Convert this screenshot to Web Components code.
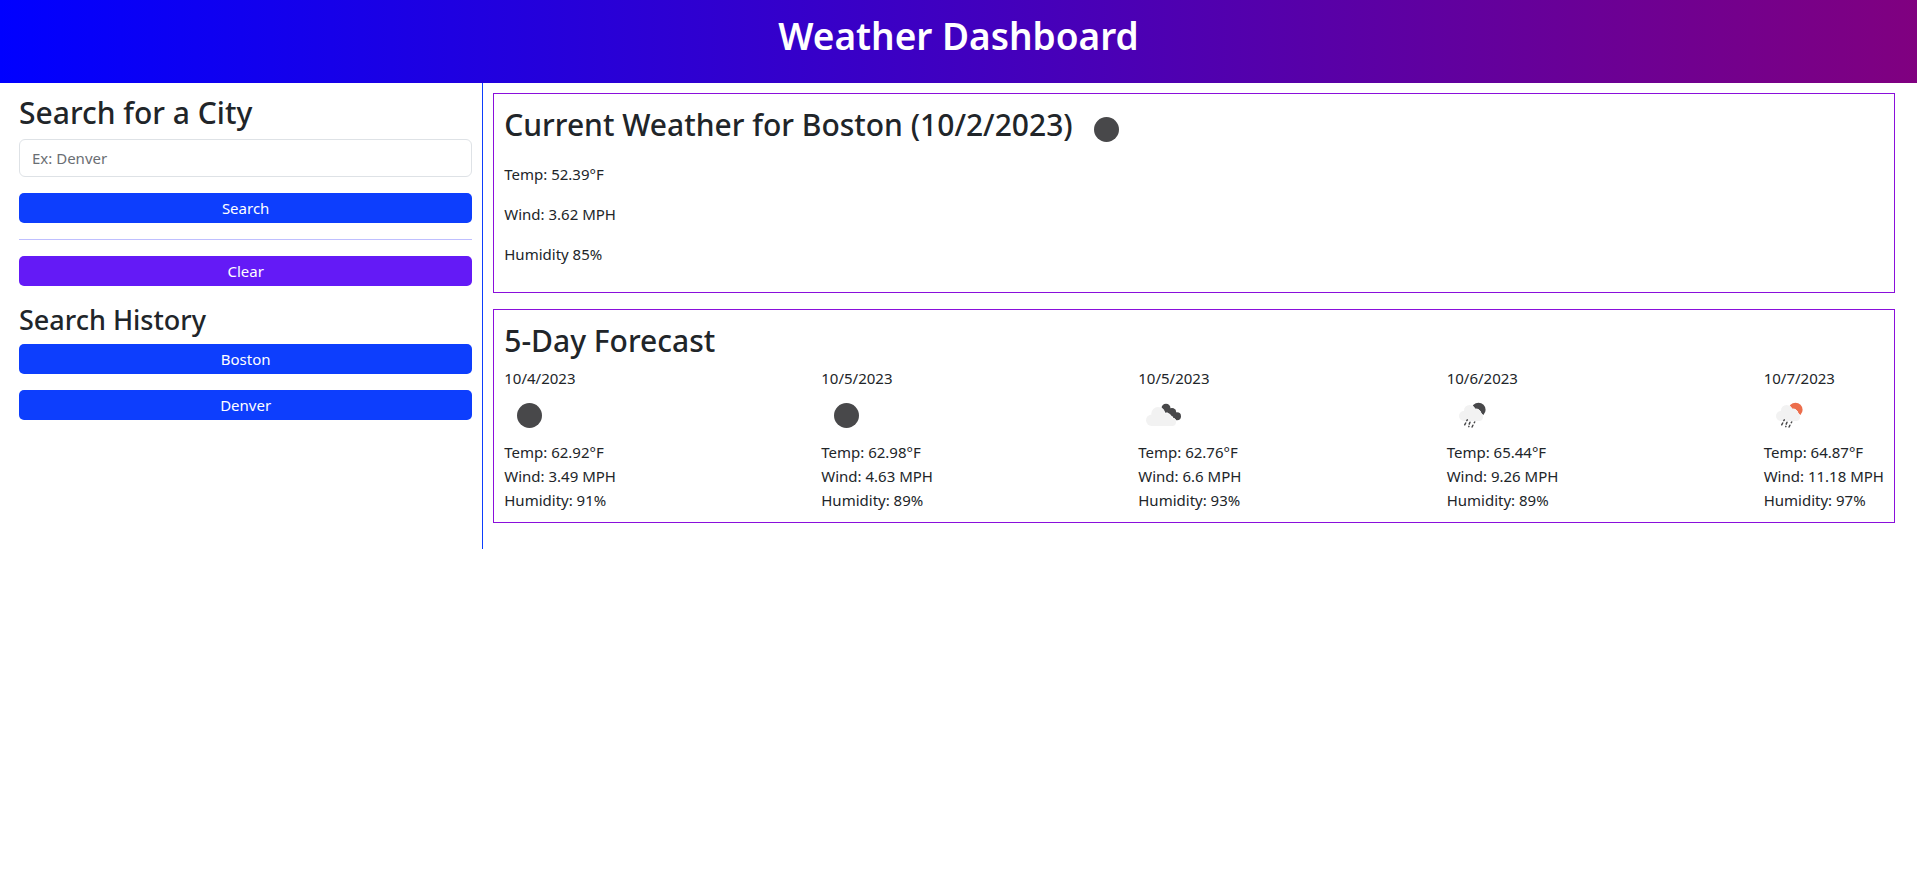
<!DOCTYPE html>
<html lang="en">
<head>
<meta charset="utf-8">
<meta name="viewport" content="width=device-width, initial-scale=1">
<title>Weather Dashboard</title>
<style>
body { margin: 0; background: #fff; color: #212529; font: 400 15px/24px "Noto Sans", "Open Sans", sans-serif; }
</style>
</head>
<body>
<weather-app></weather-app>

<script>
const define = (name, html, setup) => {
  const template = document.createElement('template');
  template.innerHTML = html;
  customElements.define(name, class extends HTMLElement {
    constructor() {
      super();
      this.attachShadow({ mode: 'open' }).append(template.content.cloneNode(true));
    }
    connectedCallback() { if (setup) setup(this, this.shadowRoot); }
  });
};

const outlined = shapes => `<g fill="#fff" stroke="#fff" stroke-width="1">${shapes}</g><g fill="#f2f2f2">${shapes}</g>`;
const smallCloud = outlined(`
  <circle cx="17" cy="26" r="5"/><circle cx="22.500" cy="20.500" r="5.500"/>
  <circle cx="29" cy="24" r="5"/><circle cx="32" cy="27" r="4"/>
  <path d="M17 22h15v9H17z"/>`);
const bigCloud = outlined(`
  <circle cx="13.700" cy="30.300" r="5.700"/><circle cx="20" cy="23.700" r="6.700"/>
  <circle cx="28.500" cy="28.500" r="5.300"/><circle cx="34" cy="32" r="4"/>
  <path d="M13.700 26h17v4h3.300v6H13.700z"/>`);
const drops = `
  <path stroke="#48484a" stroke-width="1.500" stroke-linecap="round"
    d="M20.300 29.800l-.5.9M18.700 33l-1 1.800M23 32.200l-.8 1.900M27.700 32l-.4.7M21.800 36.600l.1-.2M25.900 35.300l-.8 1.700"/>`;
const rain = color => `<circle cx="31.500" cy="19.800" r="7.100" fill="${color}"/>${smallCloud}${drops}`;
const icons = {
  moon: '<circle cx="25.500" cy="25.500" r="12.500" fill="#48484a"/>',
  clouds: `<g fill="#48484a"><circle cx="28" cy="18.200" r="4.500"/><circle cx="34" cy="22.300" r="4.200"/>
    <circle cx="39" cy="26.200" r="4"/></g>${bigCloud}`,
  'rain-night': rain('#48484a'),
  'rain-day': rain('#ec6e4c'),
};

define('weather-icon', `
<style>
  :host { display: block; width: 50px; height: 50px; flex: none; }
  svg { display: block; width: 100%; height: 100%; }
</style>
<svg viewBox="0 0 50 50" aria-hidden="true"></svg>`,
(el, root) => { root.querySelector('svg').innerHTML = icons[el.getAttribute('name')]; });

define('app-header', `
<style>
  :host { display: block; padding: 12px 0 23px; background: linear-gradient(to right, blue, purple); color: #fff; }
  h1 { margin: 0; font-size: 37px; line-height: 48px; font-weight: 600; text-align: center; }
</style>
<h1><slot></slot></h1>`);

define('action-button', `
<style>
  :host { display: block; }
  button { display: block; width: 100%; margin: 0; padding: 3px 8px; border: 0; border-radius: 5px;
    background: var(--button-color, #0d3efd); color: #fff; font: inherit; text-align: center; cursor: pointer; }
</style>
<button type="button"><slot></slot></button>`);

define('search-panel', `
<style>
  :host { display: block; padding: 10px 10px 16px 11px; border-right: 1px solid #0d3efd; }
  h2, h3 { margin: 0 0 6px; font-weight: 500; }
  h2 { font-size: 30px; line-height: 40px; }
  h3 { font-size: 27px; line-height: 36px; margin-top: 16px; }
  label { display: block; }
  input { display: block; box-sizing: border-box; width: 100%; height: 38px; margin: 0 0 16px; padding: 6px 12px;
    border: 1px solid #dee2e6; border-radius: 6px; background: #fff; color: inherit; font: inherit; }
  input::placeholder { color: #6a6e73; opacity: 1; }
  hr { margin: 16px 0; border: 0; border-top: 1px solid #bfbfff; }
  .clear { --button-color: #641af6; }
  .history { display: grid; gap: 16px; }
</style>
<h2><label for="city">Search for a City</label></h2>
<input id="city" type="text" placeholder="Ex: Denver">
<action-button>Search</action-button>
<hr>
<action-button class="clear">Clear</action-button>
<h3>Search History</h3>
<div class="history"><slot></slot></div>`);

define('weather-card', `
<style>
  :host { display: block; padding: 10px; border: 1px solid #8a0fdb; }
</style>
<slot></slot>`);

define('current-weather', `
<style>
  :host { display: block; }
  header { display: flex; align-items: flex-start; gap: 8px; margin-bottom: 8px; }
  h2 { margin: 0; font-size: 30px; line-height: 42px; font-weight: 500; }
  p { margin: 0 0 16px; }
</style>
<header><h2>Current Weather for Boston (10/2/2023)</h2><weather-icon name="moon"></weather-icon></header>
<p>Temp: 52.39°F</p>
<p>Wind: 3.62 MPH</p>
<p>Humidity 85%</p>`);

define('forecast-day', `
<style>
  :host { display: block; }
</style>
<div class="date"></div>
<weather-icon></weather-icon>
<div class="temp"></div>
<div class="wind"></div>
<div class="humidity"></div>`,
(el, root) => {
  const get = name => el.getAttribute(name);
  root.querySelector('.date').textContent = get('date');
  root.querySelector('weather-icon').replaceWith(Object.assign(document.createElement('template'),
    { innerHTML: `<weather-icon name="${get('icon')}"></weather-icon>` }).content);
  root.querySelector('.temp').textContent = `Temp: ${get('temp')}°F`;
  root.querySelector('.wind').textContent = `Wind: ${get('wind')} MPH`;
  root.querySelector('.humidity').textContent = `Humidity: ${get('humidity')}%`;
});

define('five-day-forecast', `
<style>
  :host { display: block; }
  h2 { margin: 0 0 4px; font-size: 30px; line-height: 42px; font-weight: 500; }
  .days { display: flex; flex-wrap: wrap; justify-content: space-between; }
</style>
<h2>5-Day Forecast</h2>
<div class="days">
  <forecast-day date="10/4/2023" icon="moon" temp="62.92" wind="3.49" humidity="91"></forecast-day>
  <forecast-day date="10/5/2023" icon="moon" temp="62.98" wind="4.63" humidity="89"></forecast-day>
  <forecast-day date="10/5/2023" icon="clouds" temp="62.76" wind="6.6" humidity="93"></forecast-day>
  <forecast-day date="10/6/2023" icon="rain-night" temp="65.44" wind="9.26" humidity="89"></forecast-day>
  <forecast-day date="10/7/2023" icon="rain-day" temp="64.87" wind="11.18" humidity="97"></forecast-day>
</div>`);

define('weather-app', `
<style>
  :host { display: block; }
  main { display: grid; grid-template-columns: minmax(0, 1fr) minmax(0, 3fr); padding: 0 8px; }
  .results { display: grid; align-content: start; gap: 16px; padding: 10px 14px 26px 10px; }
</style>
<app-header>Weather Dashboard</app-header>
<main>
  <search-panel>
    <action-button>Boston</action-button>
    <action-button>Denver</action-button>
  </search-panel>
  <section class="results">
    <weather-card><current-weather></current-weather></weather-card>
    <weather-card><five-day-forecast></five-day-forecast></weather-card>
  </section>
</main>`);
</script>
</body>
</html>
